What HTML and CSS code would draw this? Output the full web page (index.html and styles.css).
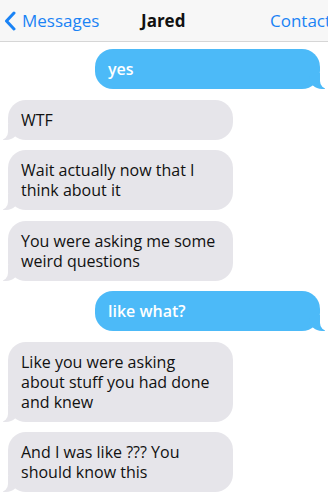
FILE: index.html
```html
<!DOCTYPE html>
<html>
<head>
<meta charset="utf-8">
<link rel="stylesheet" href="styles.css">
</head>
<body>
<header class="nav">
  <div class="back">
    <svg class="chev" width="12" height="20" viewBox="0 0 12 20"><path d="M10 2 L2.5 10 L10 18" fill="none" stroke="#1a83f5" stroke-width="3" stroke-linecap="round" stroke-linejoin="round"/></svg>
    <span>Messages</span>
  </div>
  <div class="title">Jared</div>
  <div class="contact">Contacts</div>
</header>
<main class="thread">
  <div class="msg sent">yes</div>
  <div class="msg recv">WTF</div>
  <div class="msg recv">Wait actually now that I think about it</div>
  <div class="msg recv">You were asking me some weird questions</div>
  <div class="msg sent">like what?</div>
  <div class="msg recv">Like you were asking about stuff you had done and knew</div>
  <div class="msg recv">And I was like ??? You should know this</div>
</main>
</body>
</html>
```
FILE: styles.css
```css
html, body {
  margin: 0;
  padding: 0;
  background: #fff;
  overflow: hidden;
  width: 328px;
  height: 496px;
}
body {
  font-family: "Open Sans", "Liberation Sans", sans-serif;
}
.nav {
  height: 41px;
  background: #f7f7f7;
  border-bottom: 1px solid #d6d6d6;
  display: flex;
  align-items: center;
  white-space: nowrap;
  overflow: hidden;
}
.back {
  display: flex;
  align-items: center;
  color: #1a83f5;
  font-size: 17px;
  padding-left: 4px;
  width: 141px;
  box-sizing: border-box;
  flex: none;
}
.chev { margin-right: 6px; }
.title {
  font-weight: 700;
  font-size: 17px;
  color: #111;
  width: 129px;
  flex: none;
}
.contact {
  color: #1a83f5;
  font-size: 17px;
  flex: none;
}
.thread {
  display: flex;
  flex-direction: column;
  gap: 10.5px;
  padding: 7px 8px 0 8px;
}
.msg {
  position: relative;
  width: 225px;
  box-sizing: border-box;
  padding: 10px 13px;
  font-size: 16px;
  line-height: 20px;
  border-radius: 18px;
}
.sent {
  align-self: flex-end;
  background: #4cbaf8;
  color: #fff;
  font-weight: 600;
}
.recv {
  align-self: flex-start;
  background: #e6e5ea;
  color: #111;
}
.sent::before, .sent::after, .recv::before, .recv::after {
  content: "";
  position: absolute;
  bottom: 0;
}
.sent::before {
  right: -5px;
  width: 16px;
  height: 16px;
  background: #4cbaf8;
  border-bottom-left-radius: 13px;
}
.sent::after {
  right: -9px;
  width: 9px;
  height: 18px;
  background: #fff;
  border-bottom-left-radius: 8px;
}
.recv::before {
  left: -5px;
  width: 16px;
  height: 16px;
  background: #e6e5ea;
  border-bottom-right-radius: 13px;
}
.recv::after {
  left: -9px;
  width: 9px;
  height: 18px;
  background: #fff;
  border-bottom-right-radius: 8px;
}
```
